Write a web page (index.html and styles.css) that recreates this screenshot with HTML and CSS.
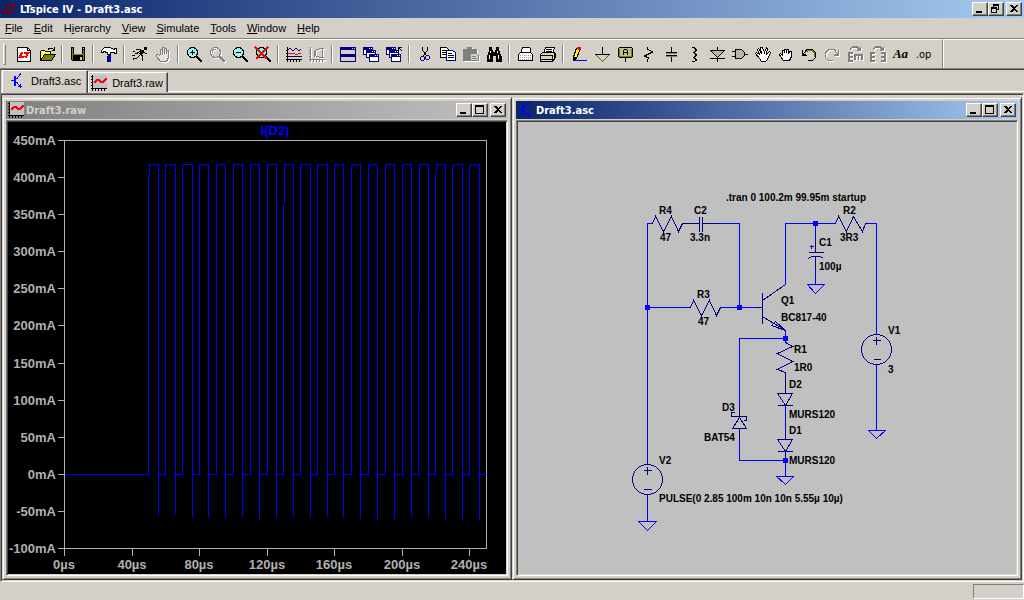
FILE: index.html
```html
<!DOCTYPE html>
<html lang="en">
<head>
<meta charset="utf-8">
<title>LTspice IV - Draft3.asc</title>
<link rel="stylesheet" href="styles.css">
</head>
<body>
<svg class="defs" aria-hidden="true">
  <symbol id="wave" viewBox="0 0 16 16">
    <path fill="#c0c0c0" d="M2 0h14v13H2z"/>
    <path d="M1.500 0v16M0 13.500h16M0 1.500h2M0 4.500h2M0 7.500h2M0 10.500h2M4.500 13v3M7.500 13v3M10.500 13v3M13.500 13v3" stroke="#000"/>
    <path d="M3 8L6 5h2l2 2h2l3-3h1" stroke="#f00" stroke-width="2" fill="none"/>
  </symbol>
  <symbol id="npn" viewBox="0 0 16 16">
    <path d="M1 7.500h4M10.500 0v1l-4 5M6.500 9l4 5M8 13.500h4M10.500 11v4" stroke="#00f" fill="none"/>
    <path d="M5 3v10" stroke="#00f" stroke-width="2"/>
  </symbol>
  <symbol id="lens" viewBox="0 0 20 20">
    <circle cx="8.500" cy="8.500" r="5" fill="none" stroke="currentColor"/>
    <path d="M12 12l6 6" stroke="currentColor" stroke-width="2.500"/>
  </symbol>
  <symbol id="min" viewBox="0 0 12 10"><path d="M2 7h6v2H2z"/></symbol>
  <symbol id="max" viewBox="0 0 12 10"><path fill-rule="evenodd" d="M1 0h9v9H1zM2 2h7v6H2z"/></symbol>
  <symbol id="close" viewBox="0 0 12 10"><path d="M2 1h2l2 2 2-2h2L7 4.500 10 8H8L6 6 4 8H2l3-3.500z"/></symbol>
  <symbol id="restore" viewBox="0 0 12 10"><path fill-rule="evenodd" d="M3 0h6v6H7v3H1V3h2zM4 2v1h3v2h1V2zM2 5v3h4V5z"/></symbol>
  <symbol id="card" viewBox="0 0 10 8"><path fill="#000080" d="M0 0h10v8H0z"/><path fill="#fff" d="M1 3h8v4H1zM6 1h1v1H6zM8 1h1v1H8z"/></symbol>
</svg>

<header class="titlebar active">
  <svg class="logo" viewBox="0 0 16 16"><path d="M4 3h2L4 11h4l-1 2H1zM8 3h7l-1 2h-2l-2 8H8l2-8H7z" fill="#800000"/></svg>
  <h1 class="caption">LTspice IV - Draft3.asc</h1>
  <div class="controls">
    <button class="ctl" aria-label="Minimize"><svg><use href="#min"/></svg></button>
    <button class="ctl" aria-label="Restore"><svg><use href="#restore"/></svg></button>
    <button class="ctl shut" aria-label="Close"><svg><use href="#close"/></svg></button>
  </div>
</header>

<nav class="menubar">
  <button><u>F</u>ile</button><button><u>E</u>dit</button><button>H<u>i</u>erarchy</button><button><u>V</u>iew</button><button><u>S</u>imulate</button><button><u>T</u>ools</button><button><u>W</u>indow</button><button><u>H</u>elp</button>
</nav>

<div class="toolrow">
<div class="toolbar" role="toolbar">
  <span class="grip"></span>
  <button class="tool" aria-label="New schematic"><svg viewBox="0 0 20 20"><path d="M3.500 3.500h10l3 3v11h-13z" fill="#fff" stroke="#000"/><path d="M13.500 3v3.500H17" fill="none" stroke="#000"/><path d="M7 8h2l-1 4h3l-1 2H4zM10 8h6l-1 2h-1l-1 4h-2l1-4h-2z" fill="#f00"/></svg></button>
  <button class="tool" aria-label="Open"><svg viewBox="0 0 20 20"><path d="M3.500 16.500v-9l1-1h3l1 1h5v3" fill="#ffff60" stroke="#000"/><path d="M3.500 16.500l4-6h11l-4 6z" fill="#808000" stroke="#000"/><path d="M11 5.500l1-1h3l2 1M17.500 3v4M15 6.500h3" fill="none" stroke="#000"/></svg></button>
  <span class="sep"></span>
  <button class="tool" aria-label="Save"><svg viewBox="0 0 20 20"><path d="M3 3h14v14H4l-1-1z"/><path d="M4 4h1v12H4zM15 6h1v10h-1zM5 10h10v1H5z" fill="#808000"/><path d="M6 3h8v7H6zM12 13h2v3h-2z" fill="#d4d0c8"/><path d="M15 4h1v1h-1z" fill="#d4d0c8"/></svg></button>
  <span class="sep"></span>
  <button class="tool" aria-label="Control panel"><svg viewBox="0 0 20 20"><path d="M2.500 8.500v-2l3-3h6l3 2 2-1h1v5h-1l-2-1h-3v2h-3v-2h-1l-2-1-2 1z" fill="#fff" stroke="#000"/><path d="M9 11h3v7H9z" fill="#0000c0"/><path d="M8 12h1v6H8z" fill="#000"/></svg></button>
  <span class="sep"></span>
  <button class="tool" aria-label="Run"><svg viewBox="0 0 20 20"><path d="M14 3h3v3h-3z"/><path d="M11 6h3v2l-2 3h-2l-1-1z"/><path d="M6 5.500h3l3 1M11 10l2 3-1 4M10 11l-3 3H3v2M13 8l2 1h2M10 7L7 9.500H5" fill="none" stroke="#000"/><path d="M3 7.500h2M2 11.500h3" stroke="#000"/></svg></button>
  <button class="tool off" aria-label="Halt" disabled><svg viewBox="0 0 20 20"><path d="M7.500 11V5.500h2V11M9.500 9V3.500h2V10M11.500 9V4.500h2V10M13.500 10V6.500h2v7l-2 4h-6l-4-5v-2h2l2 2" fill="#e4e1db" stroke="#808080"/></svg></button>
  <span class="sep"></span>
  <button class="tool" aria-label="Zoom in"><svg viewBox="0 0 20 20"><circle cx="8.500" cy="8.500" r="5" fill="#a0f0f0"/><use href="#lens"/><path d="M6 8.500h5M8.500 6v5" stroke="#000" stroke-width="1"/></svg></button>
  <button class="tool off" aria-label="Pan" disabled><svg viewBox="0 0 20 20"><use href="#lens"/><path d="M5 9a4 4 0 0 1 4-4" fill="none" stroke="#808080"/></svg></button>
  <button class="tool" aria-label="Zoom out"><svg viewBox="0 0 20 20"><circle cx="8.500" cy="8.500" r="5" fill="#a0f0f0"/><use href="#lens"/><path d="M6 8.500h5" stroke="#000"/></svg></button>
  <button class="tool" aria-label="Zoom fit"><svg viewBox="0 0 20 20"><circle cx="8.500" cy="8.500" r="5" fill="#60ffff"/><use href="#lens"/><path d="M2 3l12 12M15 3L3 15" stroke="#f00" stroke-width="2"/></svg></button>
  <span class="sep"></span>
  <button class="tool" aria-label="Autorange"><svg viewBox="0 0 20 20"><path d="M3.500 3v15M2 15.500h16M2 6.500h2M2 9.500h2M2 12.500h2M6.500 15v3M9.500 15v3M12.500 15v3M15.500 15v3" stroke="#000"/><path d="M4 6l2-2 3 3 3-3 3 3 2-2" fill="none" stroke="#000080"/><path d="M4 10l2-1h3l2 1h3l3-1" fill="none" stroke="#f00"/><path d="M4 13l3-1 3 1 4-1h4" fill="none" stroke="#000080"/></svg></button>
  <button class="tool off" aria-label="Pick axes" disabled><svg viewBox="0 0 20 20"><path d="M3.500 3v15M2 15.500h16M2 6.500h2M2 9.500h2M2 12.500h2M6.500 15v3M9.500 15v3M12.500 15v3M15.500 15v3M7 13V7h2M15 4v10M12 4.500h5M12 13.500h5" stroke="#808080" fill="none"/><path d="M12 5a4 4 0 0 0 0 8" fill="none" stroke="#808080"/></svg></button>
  <span class="sep"></span>
  <button class="tool" aria-label="Tile windows"><svg viewBox="0 0 20 20"><path d="M2 3h16v15H2z" fill="#000080"/><path d="M3 6h14v4H3zM3 13h14v4H3zM14 4h1v1h-1zM16 4h1v1h-1z" fill="#d4d0c8"/></svg></button>
  <button class="tool" aria-label="Cascade windows"><svg viewBox="0 0 20 20"><use href="#card" x="2" y="3" width="10" height="8"/><use href="#card" x="5" y="6" width="10" height="8"/><use href="#card" x="8" y="10" width="10" height="8"/></svg></button>
  <button class="tool" aria-label="Close all"><svg viewBox="0 0 20 20"><use href="#card" x="2" y="3" width="10" height="8"/><use href="#card" x="5" y="6" width="10" height="8"/><use href="#card" x="7" y="10" width="10" height="8"/><path d="M14.500 7V3.500H18M15 4l3 3" fill="none" stroke="#000"/></svg></button>
  <span class="sep"></span>
  <button class="tool" aria-label="Cut"><svg viewBox="0 0 20 20"><path d="M7.500 3v3l4 6M12.500 3v3l-4 6" fill="none" stroke="#000"/><circle cx="7.500" cy="14.500" r="2" fill="none" stroke="#000080"/><circle cx="12.500" cy="13.500" r="2" fill="none" stroke="#000080"/></svg></button>
  <button class="tool" aria-label="Copy"><svg viewBox="0 0 20 20"><path d="M2.500 3.500h6l2 2v8h-8z" fill="#fff" stroke="#000"/><path d="M4 6.500h4M4 8.500h4M4 10.500h4" stroke="#000"/><path d="M8.500 6.500h6l3 2v8h-9z" fill="#fff" stroke="#000080"/><path d="M10 9.500h4M10 11.500h6M10 13.500h6" stroke="#000"/></svg></button>
  <button class="tool off" aria-label="Paste" disabled><svg viewBox="0 0 20 20"><path d="M2 5h4V3h5v2h5v12H2z" fill="#808080"/><path d="M9.500 9.500h6l2 2v5h-8z" fill="#d4d0c8" stroke="#808080"/><path d="M11 12.500h4M11 14.500h5" stroke="#808080"/></svg></button>
  <button class="tool" aria-label="Find"><svg viewBox="0 0 20 20"><path d="M5 3h3v3h1v2h2V6h1V3h3v3l3 7v5h-6v-6H9v6H3v-5l2-7z"/><path d="M6 7h1v2H6zM5 11h1v4H5zM13 7h1v2h-1zM14 11h1v4h-1z" fill="#fff"/></svg></button>
  <span class="sep"></span>
  <button class="tool" aria-label="Print setup"><svg viewBox="0 0 20 20"><path d="M5.500 9.500l2-6h7l1 1v5" fill="#fff" stroke="#000"/><path d="M3.500 10.500l2-2h10l2 2v6h-14z" fill="#fff" stroke="#000"/><path d="M5 11.500h11M5 13.500h11M5 15.500h11" stroke="#a0a0a0" stroke-dasharray="1 1"/></svg></button>
  <button class="tool" aria-label="Print"><svg viewBox="0 0 20 20"><path d="M5.500 9.500l2-6h9l-2 6z" fill="#fff" stroke="#000"/><path d="M8 5.500h6M8 7.500h6" stroke="#000"/><path d="M2.500 10.500l2-2h12l1 1v4l-3 4h-12z" fill="#d4d0c8" stroke="#000"/><path d="M3 11.500h12M3 15.500h12M14.500 11v6M16.500 9v5" stroke="#000"/><path d="M10 13h3v1h-3z" fill="#ff0"/></svg></button>
  <span class="sep"></span>
  <button class="tool" aria-label="Wire"><svg viewBox="0 0 20 20"><path d="M4.500 13l3-9h3l1 1-4 9-2 2h-1z" fill="#ff0" stroke="#000"/><path d="M8 3h3l1 1v2H9z" fill="#f00"/><path d="M4 13h3l-3 4z"/><path d="M4 16.500h14" stroke="#00f"/></svg></button>
  <button class="tool" aria-label="Ground"><svg viewBox="0 0 20 20"><path d="M10.500 3v7" stroke="#000"/><path d="M3.500 10.500h14l-7 7z" fill="#d4d0c8" stroke="#606000"/><path d="M3 10.500h15" stroke="#000"/></svg></button>
  <button class="tool" aria-label="Label net"><svg viewBox="0 0 20 20"><path d="M4.500 3.500h12l1 1v8l-1 1h-12l-1-1v-8z" fill="#c0bd90" stroke="#000"/><path d="M4.500 5v7.500h12V5" fill="none" stroke="#808000"/><path d="M10.500 14v4M8.500 11V7l1-1.500h2l1 1.500v4M8.500 8.500h4" fill="none" stroke="#000"/></svg></button>
  <button class="tool" aria-label="Resistor"><svg viewBox="0 0 20 20"><path d="M9.500 3v2l5 3-8 4 4 2-1 2v2" fill="none" stroke="#000"/></svg></button>
  <button class="tool" aria-label="Capacitor"><svg viewBox="0 0 20 20"><path d="M10.500 3v6M10.500 12v6M5 8.500h11M5 11.500h11" stroke="#000"/><path d="M5 9.500h11M5 12.500h11" stroke="#808080"/></svg></button>
  <button class="tool" aria-label="Inductor"><svg viewBox="0 0 20 20"><path d="M8 3.500h2l2 2v1l-2 2H9h1l2 2v1l-2 2H9h1l2 2v1l-2 1H8" fill="none" stroke="#000"/></svg></button>
  <button class="tool" aria-label="Diode"><svg viewBox="0 0 20 20"><path d="M3.500 6.500h14l-7 7z" fill="#b8b4ac" stroke="#000"/><path d="M10.500 3v4M10.500 13v5M3 14.500h15" stroke="#000"/></svg></button>
  <button class="tool" aria-label="Component"><svg viewBox="0 0 20 20"><path d="M5.500 5.500h6l3 3v3l-3 3h-6z" fill="#b8b4ac" stroke="#000"/><path d="M2 7.500h3M2 12.500h3M15 10.500h3" stroke="#000"/></svg></button>
  <button class="tool" aria-label="Move"><svg viewBox="0 0 20 20"><path d="M6.500 14.500l-4-5 1-1 3 2-2-5 1-1 3 5-1-6h2l2 5 2-5 1 1-1 6 3-3 1 1-3 7-2 2h-4z" fill="#fff" stroke="#000"/></svg></button>
  <button class="tool" aria-label="Drag"><svg viewBox="0 0 20 20"><path d="M7.500 16.500l-3-4-1-2 1-1 2 2v-5h2v2-3h2v3-3h2v4l1-2h2v5l-2 4z" fill="#fff" stroke="#000"/></svg></button>
  <button class="tool" aria-label="Undo"><svg viewBox="0 0 20 20"><path d="M5 9l3-3.500h5l3.500 3v5l-3 3H9" fill="none" stroke="#000"/><path d="M6 9l3-2.500h4l2.500 2.500v4" fill="none" stroke="#808000"/><path d="M3 6l1 0 0 3 4 2v1H3z"/></svg></button>
  <button class="tool off" aria-label="Redo" disabled><svg viewBox="0 0 20 20"><path d="M15 9l-3-3.500H7L3.500 9v4.500l3 3H11" fill="none" stroke="#808080"/><path d="M17 6h-1v3l-4 2v1h5z" fill="#808080"/></svg></button>
  <button class="tool off" aria-label="Rotate" disabled><svg viewBox="0 0 20 20"><path d="M8 9H4v8h4M4 13h4M10 16v-5h7v5M13.500 11v5M5 5l3-2h4l3 3M15.500 3v4M12 6.500h4" fill="none" stroke="#808080" stroke-width="1.500"/></svg></button>
  <button class="tool off" aria-label="Mirror" disabled><svg viewBox="0 0 20 20"><path d="M7 9H3v8h4M3 13h4M13 9h4v8h-4M17 13h-4M5 5l3-2h4l3 3M15.500 3v4M12 6.500h4" fill="none" stroke="#808080" stroke-width="1.500"/></svg></button>
  <button class="tool text-tool">Aa</button>
  <button class="tool op-tool">.op</button>
</div>
</div>

<div class="tabs" role="tablist">
  <button class="tab current" role="tab"><svg class="tabicon"><use href="#npn"/></svg>Draft3.asc</button>
  <button class="tab" role="tab"><svg class="tabicon"><use href="#wave"/></svg>Draft3.raw</button>
</div>

<main class="mdi">
  <section class="window">
    <header class="titlebar idle">
      <svg class="logo"><use href="#wave"/></svg>
      <h2 class="caption">Draft3.raw</h2>
      <div class="controls">
        <button class="ctl" aria-label="Minimize"><svg><use href="#min"/></svg></button>
        <button class="ctl" aria-label="Maximize"><svg><use href="#max"/></svg></button>
        <button class="ctl shut" aria-label="Close"><svg><use href="#close"/></svg></button>
      </div>
    </header>
    <div class="client plot">
      <svg class="drawing" viewBox="8 122 498 452">
        <g class="axes" transform="translate(.5 .5)">
          <path d="M64 140H486V548H64z"/>
          <path d="M57 140h7M57 177h7M57 214h7M57 251h7M57 288h7M57 325h7M57 363h7M57 400h7M57 437h7M57 474h7M57 511h7M57 548h7"/>
          <path d="M64 548v7M132 548v7M199 548v7M267 548v7M334 548v7M402 548v7M469 548v7"/>
        </g>
        <path class="trace" transform="translate(.5 .5)" d="M64 474H148V175h1V164H158V515V474H165V165h1V164H175V513V474H182V165h1V164H192V517V474H199V165h1V164H208V517V474H216V165h1V164H225V517V474H233V165h1V164H242V517V474H250V165h1V164H259V518V474H267V165h1V164H276V517V474H283V203h1V164H293V516V474H300V167h1V164H310V517V474H317V165h1V164H327V516V474H334V165h1V164H343V517V474H351V165h1V164H360V518V474H368V165h1V164H377V519V474H385V165h1V164H394V518V474H402V165h1V164H411V516V474H418V310h1V164H428V517V474H435V173h1V164H445V518V474H452V166h1V164H462V518V474H469V166h1V164H479V519V474H486"/>
        <text class="trace-name" x="275" y="135">I(D2)</text>
        <g class="ylab">
          <text x="56" y="145">450mA</text><text x="56" y="182">400mA</text><text x="56" y="219">350mA</text><text x="56" y="256">300mA</text><text x="56" y="293">250mA</text><text x="56" y="330">200mA</text><text x="56" y="368">150mA</text><text x="56" y="405">100mA</text><text x="56" y="442">50mA</text><text x="56" y="479">0mA</text><text x="56" y="516">-50mA</text><text x="56" y="553">-100mA</text>
        </g>
        <g class="xlab">
          <text x="64" y="569">0µs</text><text x="132" y="569">40µs</text><text x="199" y="569">80µs</text><text x="267" y="569">120µs</text><text x="334" y="569">160µs</text><text x="402" y="569">200µs</text><text x="469" y="569">240µs</text>
        </g>
      </svg>
    </div>
  </section>

  <section class="window">
    <header class="titlebar active">
      <svg class="logo"><use href="#npn"/></svg>
      <h2 class="caption">Draft3.asc</h2>
      <div class="controls">
        <button class="ctl" aria-label="Minimize"><svg><use href="#min"/></svg></button>
        <button class="ctl" aria-label="Maximize"><svg><use href="#max"/></svg></button>
        <button class="ctl shut" aria-label="Close"><svg><use href="#close"/></svg></button>
      </div>
    </header>
    <div class="client sheet">
      <svg class="drawing" viewBox="518 122 498 452">
        <g class="wire" transform="translate(.5 .5)">
          <path d="M651 223H647V464M717 223H739V307M647 307H688M720 307H755M785 284V223H835M866 223H876V334M815 223V240M815 268V284M785 330V342M785 338H739V406M739 438V460H785M785 405V439M785 451V476M876 364V430M647 494V521"/>
          <path d="M807 284h17l-9 9zM776 476h17l-8 8zM868 430h17l-9 8zM638 521h18l-9 9z"/>
        </g>
        <g class="symbol" transform="translate(.5 .5)">
          <path d="M651 223h1l3-7 8 15 8-15 7 15 4-8h17M699 216v15M702 216v15M702 223h15"/>
          <path d="M688 307h2l3-7 8 15 8-15 7 15 4-8M755 307h7"/>
          <path d="M835 223l3-7 8 15 7-15 9 15 3-8h2"/>
          <path d="M762 292v31M762 300L785 284M762 316L785 330M775 321L771 325 785 330z"/>
          <path d="M815 240v12M808 252h15M808 258l3-2h9l3 2M815 256v12M809 246h4M811 244v4"/>
          <path d="M785 342l7 4-15 7 15 8-15 8 8 3v21M777 393h15l-7 12zM777 405h15M777 439h15l-7 12zM777 451h15M785 432v7M785 451v5"/>
          <path d="M739 406v10M734 412h-3v4h15v4h-3M739 417l-7 11h14zM739 428v10"/>
          <circle cx="876" cy="349" r="15"/><path d="M872 340h8M876 336v8M873 359h7"/>
          <circle cx="647" cy="479" r="15"/><path d="M643 470h8M647 466v8M643 489h8"/>
        </g>
        <path class="node" d="M645 305h5v5h-5zM737 305h5v5h-5zM813 221h5v5h-5zM783 336h5v5h-5zM783 458h5v5h-5z"/>
        <g class="note">
          <text x="726" y="201">.tran 0 100.2m 99.95m startup</text>
          <text x="659" y="214">R4</text><text x="694" y="214">C2</text><text x="660" y="241">47</text><text x="690" y="241">3.3n</text>
          <text x="697" y="298">R3</text><text x="698" y="325">47</text>
          <text x="819" y="246">C1</text><text x="819" y="270">100µ</text>
          <text x="843" y="214">R2</text><text x="840" y="241">3R3</text>
          <text x="781" y="304">Q1</text><text x="781" y="321">BC817-40</text>
          <text x="888" y="334">V1</text><text x="888" y="373">3</text>
          <text x="794" y="353">R1</text><text x="794" y="371">1R0</text>
          <text x="789" y="388">D2</text><text x="789" y="418">MURS120</text>
          <text x="789" y="434">D1</text><text x="789" y="464">MURS120</text>
          <text x="722" y="411">D3</text><text x="704" y="441">BAT54</text>
          <text x="659" y="464">V2</text><text x="659" y="502">PULSE(0 2.85 100m 10n 10n 5.55µ 10µ)</text>
        </g>
      </svg>
    </div>
  </section>
</main>

<footer class="statusbar"><span class="pane"></span></footer>
</body>
</html>
```
FILE: styles.css
```css
* { box-sizing: border-box; }
body {
  margin: 0;
  height: 100vh;
  display: flex;
  flex-direction: column;
  overflow: hidden;
  background: #d4d0c8;
  color: #000;
  font: 11px "Liberation Sans", Arial, sans-serif;
}
button {
  margin: 0;
  padding: 0;
  border: 0;
  background: none;
  color: inherit;
  font: inherit;
}
svg { display: block; shape-rendering: crispEdges; }
.defs { display: none; }

.titlebar {
  flex: none;
  height: 18px;
  display: flex;
  align-items: center;
  padding: 0 2px;
}
.titlebar.active { background: linear-gradient(90deg, #0a246a, #a6caf0); color: #fff; }
.titlebar.idle { background: linear-gradient(90deg, #808080, #c0c0c0); color: #d4d0c8; }
.logo { width: 16px; height: 16px; flex: none; }
.caption {
  flex: 1;
  margin: 0;
  padding-left: 2px;
  font: bold 11px "DejaVu Sans Condensed", "DejaVu Sans", sans-serif;
  white-space: nowrap;
}
.controls { display: flex; color: #000; }
.ctl {
  width: 16px;
  height: 14px;
  padding: 1px;
  background: #d4d0c8;
  border: 1px solid;
  border-color: #fff #404040 #404040 #fff;
  box-shadow: inset -1px -1px #808080;
}
.ctl svg { width: 12px; height: 10px; }
.shut { margin-left: 2px; }

.menubar {
  flex: none;
  height: 20px;
  display: flex;
  align-items: center;
  padding-left: 1px;
}
.menubar button { padding: 0 6px 0 5px; }
.menubar button:first-child { padding-left: 4px; }
.menubar u { text-underline-offset: 1px; }

.toolrow {
  flex: none;
  display: flex;
  border-top: 1px solid #808080;
  border-bottom: 1px solid #808080;
  box-shadow: inset 0 1px #fff;
}
.toolbar {
  height: 29px;
  display: flex;
  align-items: center;
  padding: 0 7px 0 3px;
  border-top: 1px solid #fff;
  border-right: 1px solid #808080;
  box-shadow: 1px 0 #fff;
}
.grip {
  width: 3px;
  height: 21px;
  margin-right: 6px;
  border: 1px solid;
  border-color: #fff #808080 #808080 #fff;
}
.sep {
  width: 2px;
  height: 18px;
  margin: 0 3px;
  border-left: 1px solid #808080;
  border-right: 1px solid #fff;
}
.tool { flex: none; width: 23px; height: 22px; }
.tool svg { width: 20px; height: 20px; margin: 0 auto; }
.off { color: #808080; }
.off svg { filter: drop-shadow(1px 1px 0 #fff); }
.text-tool { font: italic bold 13px "Liberation Serif", serif; }
.op-tool { font: 11px "DejaVu Sans Condensed", sans-serif; }

.tabs {
  flex: none;
  height: 24px;
  display: flex;
  align-items: flex-start;
  padding-left: 1px;
  border-top: 1px solid #404040;
  border-left: 1px solid #808080;
  box-shadow: inset 0 -1px #d4d0c8, inset 0 -2px #fff;
}
.tab {
  height: 20px;
  margin-top: 2px;
  display: flex;
  align-items: center;
  gap: 5px;
  padding: 0 4px 0 2px;
  background: #d4d0c8;
  border: 1px solid;
  border-color: #fff #404040 transparent #fff;
  border-bottom: 0;
  box-shadow: inset -1px 0 #808080;
}
.tab.current { height: 23px; margin-top: 0; padding: 0 6px 2px 7px; }
.tabicon { width: 16px; height: 16px; }

.mdi {
  flex: 1;
  min-height: 0;
  display: flex;
  padding: 3px 1px 1px;
  border: 1px solid;
  border-color: #808080 #fff #fff #808080;
  box-shadow: inset 1px 1px #404040;
}
.window {
  flex: 1;
  min-width: 0;
  display: flex;
  flex-direction: column;
  gap: 1px;
  padding: 3px;
  border: 1px solid;
  border-color: #d4d0c8 #404040 #404040 #d4d0c8;
  box-shadow: inset 1px 1px #fff, inset -1px -1px #808080;
}
.client {
  flex: 1;
  min-height: 0;
  border: 1px solid;
  border-color: #808080 #fff #fff #808080;
  padding: 1px;
  box-shadow: inset 1px 1px #404040, inset -1px -1px #d4d0c8;
}
.plot { background: #000; }
.sheet { background: #c0c0c0; }
.drawing { width: 100%; height: 100%; }
.axes { fill: none; stroke: #b0b0b0; }
.trace { fill: none; stroke: #00f; }
.plot text { font: bold 13px "Liberation Sans", Arial, sans-serif; fill: #b0b0b0; }
.plot .trace-name { fill: #00f; text-anchor: middle; }
.ylab { text-anchor: end; }
.xlab { text-anchor: middle; }
.wire { fill: none; stroke: #00f; }
.symbol { fill: none; stroke: #000080; }
.node { fill: #00f; }
.note { font: bold 10px "Liberation Sans", Arial, sans-serif; fill: #000; }

.statusbar {
  flex: none;
  height: 18px;
  display: flex;
  justify-content: flex-end;
  padding: 2px 0 1px;
}
.pane {
  width: 51px;
  border: 1px solid;
  border-color: #808080 #fff #fff #808080;
}
```
